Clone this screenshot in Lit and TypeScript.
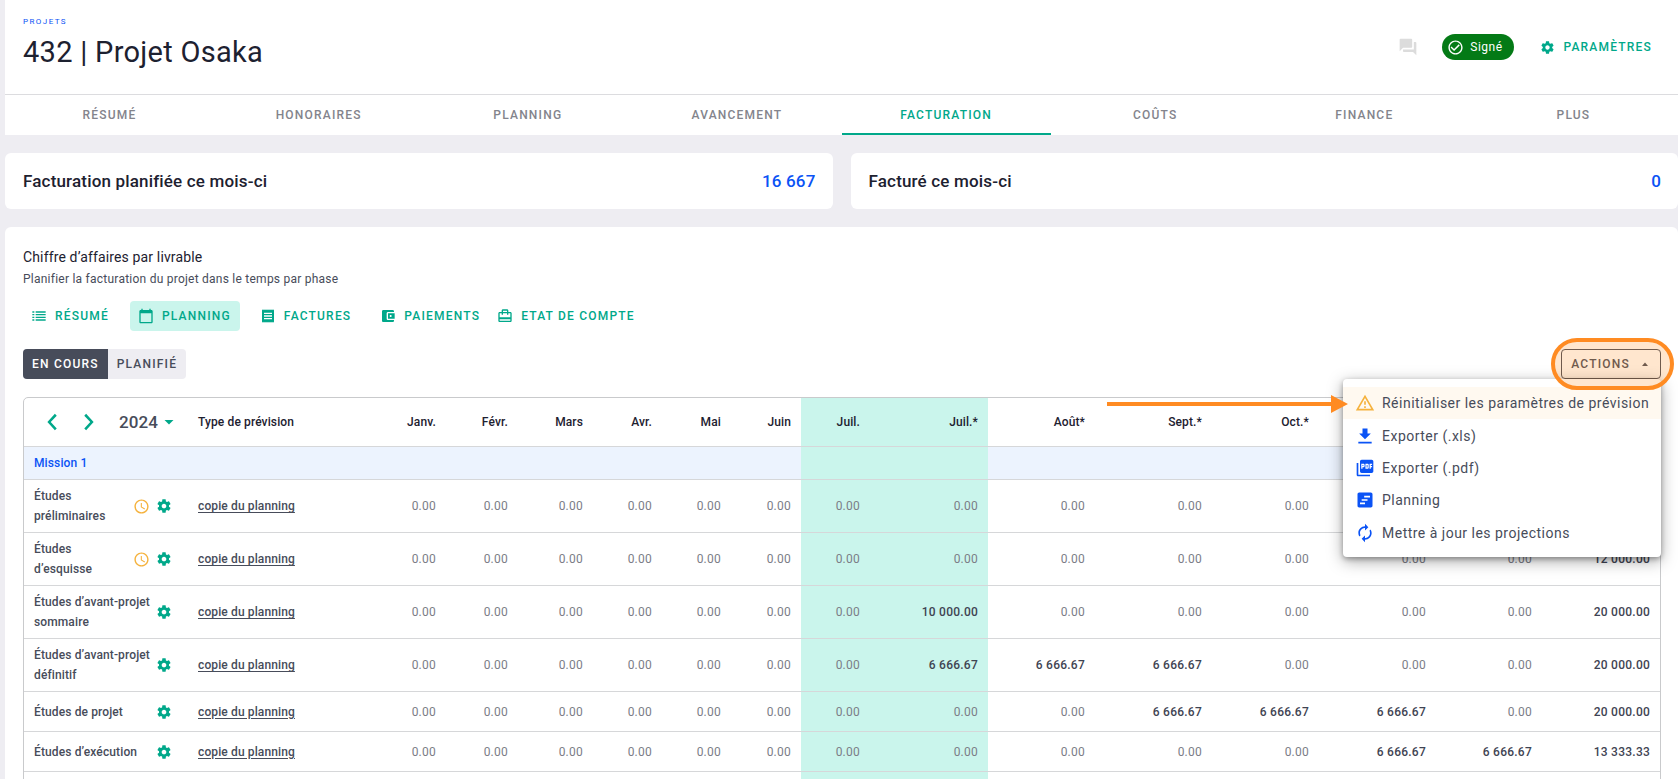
import { LitElement, html, css, svg, nothing } from "lit";
import { customElement, property, state } from "lit/decorators.js";
import { classMap } from "lit/directives/class-map.js";

const ICONS: Record<string, string> = {
  forum:
    "M21 6h-2v9H6v2c0 .55.45 1 1 1h11l4 4V7c0-.55-.45-1-1-1zm-4 6V3c0-.55-.45-1-1-1H3c-.55 0-1 .45-1 1v14l4-4h10c.55 0 1-.45 1-1z",
  check:
    "M16.59 7.58L10 14.17l-3.59-3.58L5 12l5 5 8-8zM12 2C6.48 2 2 6.48 2 12s4.48 10 10 10 10-4.48 10-10S17.52 2 12 2zm0 18c-4.42 0-8-3.58-8-8s3.58-8 8-8 8 3.58 8 8-3.58 8-8 8z",
  settings:
    "M19.43 12.98c.04-.32.07-.64.07-.98s-.03-.66-.07-.98l2.11-1.65c.19-.15.24-.42.12-.64l-2-3.46c-.12-.22-.39-.3-.61-.22l-2.49 1c-.52-.4-1.08-.73-1.69-.98l-.38-2.65C14.46 2.18 14.25 2 14 2h-4c-.25 0-.46.18-.49.42l-.38 2.65c-.61.25-1.17.59-1.69.98l-2.49-1c-.23-.09-.49 0-.61.22l-2 3.46c-.13.22-.07.49.12.64l2.11 1.65c-.04.32-.07.65-.07.98s.03.66.07.98l-2.11 1.65c-.19.15-.24.42-.12.64l2 3.46c.12.22.39.3.61.22l2.49-1c.52.4 1.08.73 1.69.98l.38 2.65c.03.24.24.42.49.42h4c.25 0 .46-.18.49-.42l.38-2.65c.61-.25 1.17-.59 1.69-.98l2.49 1c.23.09.49 0 .61-.22l2-3.46c.12-.22.07-.49-.12-.64l-2.11-1.65zM12 15.5c-1.93 0-3.5-1.57-3.5-3.5s1.57-3.5 3.5-3.5 3.5 1.57 3.5 3.5-1.57 3.5-3.5 3.5z",
  list: "M2 5h3v2H2zM2 9h3v2H2zM2 13h3v2H2zM2 17h3v2H2zM7 5h15v2H7zM7 9h15v2H7zM7 13h15v2H7zM7 17h15v2H7z",
  calendar:
    "M20 3h-1V1h-2v2H7V1H5v2H4c-1.1 0-2 .9-2 2v16c0 1.100.9 2 2 2h16c1.100 0 2-.9 2-2V5c0-1.100-.9-2-2-2zm0 18H4V8h16v13z",
  receipt:
    "M19.500 3.500L18 2l-1.500 1.500L15 2l-1.500 1.500L12 2l-1.500 1.500L9 2 7.500 3.500 6 2 4.500 3.500 3 2v20l1.500-1.500L6 22l1.500-1.500L9 22l1.500-1.500L12 22l1.500-1.500L15 22l1.500-1.500L18 22l1.500-1.500L21 22V2l-1.500 1.500zM18 17H6v-2h12v2zm0-4H6v-2h12v2zm0-4H6V7h12v2z",
  wallet:
    "M21 18v1c0 1.100-.9 2-2 2H5c-1.110 0-2-.9-2-2V5c0-1.100.89-2 2-2h14c1.100 0 2 .9 2 2v1h-9c-1.110 0-2 .9-2 2v8c0 1.100.89 2 2 2h9zm-9-2h10V8H12v8zm4-2.500c-.83 0-1.500-.67-1.500-1.500s.67-1.500 1.500-1.500 1.500.67 1.500 1.500-.67 1.500-1.500 1.500z",
  travel:
    "M20 6h-3V4c0-1.110-.89-2-2-2H9c-1.110 0-2 .89-2 2v2H4c-1.110 0-2 .89-2 2v11c0 1.110.89 2 2 2h16c1.110 0 2-.89 2-2V8c0-1.110-.89-2-2-2zM9 4h6v2H9V4zm11 15H4v-2h16v2zm0-5H4V8h3v2h2V8h6v2h2V8h3v6z",
  clock:
    "M11.990 2C6.470 2 2 6.480 2 12s4.470 10 9.990 10C17.520 22 22 17.520 22 12S17.520 2 11.990 2zM12 20c-4.420 0-8-3.580-8-8s3.580-8 8-8 8 3.580 8 8-3.580 8-8 8zm.5-13H11v6l5.250 3.150.75-1.230-4.500-2.670z",
  warning:
    "M12 5.990L19.530 19H4.470L12 5.990M12 2L1 21h22L12 2zm1 14h-2v2h2v-2zm0-6h-2v4h2v-4z",
  download: "M19 9h-4V3H9v6H5l7 7 7-7zM4 19v2h16v-2H4z",
  pdf: "M20 2H8c-1.100 0-2 .9-2 2v12c0 1.100.9 2 2 2h12c1.100 0 2-.9 2-2V4c0-1.100-.9-2-2-2zm-8.500 7.500c0 .83-.67 1.500-1.500 1.500H9v2H7.500V7H10c.83 0 1.500.67 1.500 1.500v1zm5 2c0 .83-.67 1.500-1.500 1.500h-2.500V7H15c.83 0 1.500.67 1.500 1.500v3zm4-3H19v1h1.500V11H19v2h-1.500V7h3v1.500zM9 9.500h1v-1H9v1zM4 6H2v14c0 1.100.9 2 2 2h14v-2H4V6zm10 5.500h1v-3h-1v3z",
  gantt:
    "M19 3H5c-1.100 0-2 .9-2 2v14c0 1.100.9 2 2 2h14c1.100 0 2-.9 2-2V5c0-1.100-.9-2-2-2zM12 17H6v-2h6v2zm3-4H8v-2h7v2zm3-4h-7V7h7v2z",
  renew:
    "M12 6v3l4-4-4-4v3c-4.420 0-8 3.580-8 8 0 1.570.46 3.030 1.240 4.260L6.700 14.800c-.45-.83-.7-1.790-.7-2.800 0-3.310 2.690-6 6-6zm6.760 1.740L17.300 9.200c.44.84.7 1.790.7 2.800 0 3.310-2.690 6-6 6v-3l-4 4 4 4v-3c4.420 0 8-3.580 8-8 0-1.570-.46-3.030-1.240-4.260z",
  prev: "M17 3.500 14.500 1 4.500 12l10 11 2.500-2.500L9 12z",
  next: "M7 3.500 9.500 1l10 11-10 11L7 20.500 15 12z",
};

function icon(name: string, size: number) {
  return html`<svg width=${size} height=${size} viewBox="0 0 24 24" aria-hidden="true">
    ${svg`<path fill="currentColor" fill-rule="evenodd" d=${ICONS[name]}></path>`}
  </svg>`;
}

const TABS = ["Résumé", "Honoraires", "Planning", "Avancement", "Facturation", "Coûts", "Finance", "Plus"];

const VIEWS = [
  { icon: "list", label: "Résumé" },
  { icon: "calendar", label: "Planning" },
  { icon: "receipt", label: "Factures" },
  { icon: "wallet", label: "Paiements" },
  { icon: "travel", label: "Etat de compte" },
];

const MENU = [
  { icon: "warning", label: "Réinitialiser les paramètres de prévision", warn: true },
  { icon: "download", label: "Exporter (.xls)" },
  { icon: "pdf", label: "Exporter (.pdf)" },
  { icon: "gantt", label: "Planning" },
  { icon: "renew", label: "Mettre à jour les projections" },
];

interface Column {
  label: string;
  width: number;
  current?: boolean;
}

const COLUMNS: Column[] = [
  { label: "Janv.", width: 71 },
  { label: "Févr.", width: 72 },
  { label: "Mars", width: 75 },
  { label: "Avr.", width: 69 },
  { label: "Mai", width: 69 },
  { label: "Juin", width: 70 },
  { label: "Juil.", width: 69, current: true },
  { label: "Juil.*", width: 118, current: true },
  { label: "Août*", width: 107 },
  { label: "Sept.*", width: 117 },
  { label: "Oct.*", width: 107 },
  { label: "Nov.*", width: 117 },
  { label: "Déc.*", width: 106 },
  { label: "Total", width: 118 },
];

interface Row {
  name: string;
  pending?: boolean;
  values: Record<number, string>;
}

const ROWS: Row[] = [
  { name: "Études préliminaires", pending: true, values: {} },
  { name: "Études d’esquisse", pending: true, values: { 13: "12 000.00" } },
  { name: "Études d’avant-projet sommaire", values: { 7: "10 000.00", 13: "20 000.00" } },
  { name: "Études d’avant-projet définitif", values: { 7: "6 666.67", 8: "6 666.67", 9: "6 666.67", 13: "20 000.00" } },
  { name: "Études de projet", values: { 9: "6 666.67", 10: "6 666.67", 11: "6 666.67", 13: "20 000.00" } },
  { name: "Études d’exécution", values: { 11: "6 666.67", 12: "6 666.67", 13: "13 333.33" } },
];

const base = css`
  * {
    box-sizing: border-box;
  }
  a {
    color: inherit;
    text-decoration: none;
  }
  button,
  select {
    font: inherit;
    letter-spacing: inherit;
    color: inherit;
    background: none;
    border: 0;
    margin: 0;
    padding: 0;
    cursor: pointer;
  }
  svg {
    display: block;
    flex: none;
  }
`;

@customElement("project-header")
class ProjectHeader extends LitElement {
  static styles = [
    base,
    css`
      :host {
        display: block;
        background: #fff;
      }
      .top {
        display: flex;
        justify-content: space-between;
        align-items: center;
        height: 94px;
        padding: 0 26px 0 18px;
      }
      .crumb {
        display: block;
        font-size: 8px;
        line-height: 12px;
        letter-spacing: 0.18em;
        text-transform: uppercase;
        color: #0b53f5;
      }
      h1 {
        margin: 6px 0 8px;
        font-size: 29px;
        line-height: 36px;
        font-weight: 400;
        letter-spacing: 0.01em;
        color: #1d2130;
      }
      .tools {
        display: flex;
        align-items: center;
      }
      .forum {
        color: #dcdcdc;
        margin-right: 24px;
      }
      .badge {
        display: flex;
        align-items: center;
        gap: 6px;
        height: 26px;
        padding: 0 12px 0 5px;
        margin-right: 26px;
        border-radius: 13px;
        background: #047a16;
        color: #fff;
        font-size: 12px;
        letter-spacing: 0.04em;
      }
      .settings {
        display: flex;
        align-items: center;
        gap: 8px;
        font-size: 12px;
        font-weight: 500;
        letter-spacing: 0.1em;
        text-transform: uppercase;
        color: #00a88a;
      }
      nav {
        display: grid;
        grid-template-columns: repeat(8, 1fr);
        border-top: 1px solid #dcdcdf;
      }
      .tab {
        height: 40px;
        line-height: 40px;
        text-align: center;
        font-size: 12px;
        font-weight: 500;
        letter-spacing: 0.1em;
        text-transform: uppercase;
        color: #83848c;
      }
      .tab.active {
        color: #00a88a;
        box-shadow: inset 0 -2px #00a88a;
      }
    `,
  ];

  render() {
    return html`
      <div class="top">
        <div>
          <a class="crumb" href="#">Projets</a>
          <h1>432 | Projet Osaka</h1>
        </div>
        <div class="tools">
          <button class="forum" aria-label="Commentaires">${icon("forum", 20)}</button>
          <span class="badge">${icon("check", 17)}Signé</span>
          <button class="settings">${icon("settings", 15)}Paramètres</button>
        </div>
      </div>
      <nav>
        ${TABS.map(
          (t) => html`<a href="#" class=${classMap({ tab: true, active: t === "Facturation" })}>${t}</a>`,
        )}
      </nav>
    `;
  }
}

@customElement("stat-card")
class StatCard extends LitElement {
  @property() label = "";
  @property() value = "";

  static styles = css`
    :host {
      display: flex;
      justify-content: space-between;
      padding: 0 17px 0 18px;
      line-height: 56px;
      border-radius: 6px;
      background: #fff;
      font-size: 17px;
      font-weight: 500;
      letter-spacing: 0.01em;
      color: #1d2130;
    }
    .value {
      color: #0b53f5;
    }
  `;

  render() {
    return html`<span>${this.label}</span><span class="value">${this.value}</span>`;
  }
}

@customElement("actions-menu")
class ActionsMenu extends LitElement {
  @state() private open = true;

  static styles = [
    base,
    css`
      :host {
        display: block;
        position: relative;
        z-index: 1;
      }
      .trigger {
        display: flex;
        align-items: center;
        gap: 8px;
        height: 30px;
        padding: 0 8px 0 9px;
        border: 1px solid #474c5a;
        border-radius: 4px;
        font-size: 12px;
        font-weight: 500;
        letter-spacing: 0.1em;
        text-transform: uppercase;
        color: #474c5a;
      }
      .menu {
        position: absolute;
        top: 100%;
        right: 0;
        display: flex;
        flex-direction: column;
        width: 318px;
        height: 178px;
        padding: 8px 0;
        border-radius: 4px;
        background: #fff;
        box-shadow: 0 4px 16px rgba(0, 0, 0, 0.35), 0 2px 5px rgba(0, 0, 0, 0.3);
      }
      .item {
        flex: 1;
        display: flex;
        align-items: center;
        gap: 7px;
        padding: 0 12px;
        white-space: nowrap;
        font-size: 14px;
        color: #474c5a;
        letter-spacing: 0.035em;
      }
      .item svg {
        color: #0b53f5;
      }
      .item.warn {
        background: #fff9f0;
      }
      .item.warn svg {
        color: #f5b23d;
      }
      .ring {
        position: absolute;
        inset: -11px -13px -11px -10px;
        border: 4px solid #ff8b22;
        border-radius: 26px;
        background: rgba(255, 139, 34, 0.22);
        pointer-events: none;
      }
      .arrow {
        position: absolute;
        top: 46px;
        right: 313px;
        pointer-events: none;
      }
    `,
  ];

  render() {
    return html`
      <button class="trigger" aria-haspopup="menu" aria-expanded=${this.open} @click=${() => (this.open = !this.open)}>
        Actions
        <svg width="14" height="14" viewBox="0 0 14 14" aria-hidden="true"><path d="M4 9 7 5.500 10 9z" fill="#474c5a" /></svg>
      </button>
      ${this.open
        ? html`<div class="menu" role="menu">
            ${MENU.map(
              (m) => html`<button role="menuitem" class=${classMap({ item: true, warn: !!m.warn })}>
                ${icon(m.icon, 20)}${m.label}
              </button>`,
            )}
          </div>`
        : nothing}
      <div class="ring"></div>
      <svg class="arrow" width="241" height="18" viewBox="0 0 241 18" aria-hidden="true">
        <path d="M0 7H224V0L241 9 224 18V11H0z" fill="#ff8b22" />
      </svg>
    `;
  }
}

@customElement("forecast-table")
class ForecastTable extends LitElement {
  static styles = [
    base,
    css`
      :host {
        display: block;
        border: 1px solid #c9cacc;
        border-radius: 5px;
        overflow: hidden;
      }
      table {
        width: 100%;
        table-layout: fixed;
        border-collapse: separate;
        border-spacing: 0;
        font-size: 12px;
        line-height: 20px;
        letter-spacing: 0.01em;
      }
      th,
      td {
        padding: 0 10px;
        border-bottom: 1px solid #d6d7d9;
        text-align: right;
        font-weight: 400;
        color: #7b7d87;
        white-space: nowrap;
      }
      td {
        letter-spacing: 0.02em;
      }
      thead th {
        height: 49px;
        font-weight: 500;
        color: #1d2130;
      }
      .left {
        text-align: left;
        letter-spacing: 0.01em;
      }
      .group th,
      .group td {
        height: 33px;
        background: #ecf3fe;
        color: #0b53f5;
        font-weight: 500;
      }
      .group .current,
      .current {
        background: #caf5ec;
      }
      td.filled {
        font-weight: 500;
        color: #3f4453;
      }
      .row th,
      .row td {
        height: 40px;
      }
      .row th {
        padding: 6px 10px;
        font-weight: 500;
        color: #474c5a;
        white-space: normal;
      }
      .phase {
        display: flex;
        align-items: center;
        gap: 6px;
        margin-right: 6px;
      }
      .phase .name {
        flex: 1;
      }
      .phase button {
        color: #00a88a;
      }
      .pending {
        color: #f5b23d;
      }
      .row .kind {
        color: #474c5a;
        font-weight: 500;
      }
      .kind a {
        text-decoration: underline;
        text-underline-offset: 2px;
      }
      .years {
        display: flex;
        align-items: center;
        padding-left: 10px;
        color: #00a88a;
      }
      .years button {
        margin-right: 17px;
      }
      .year {
        display: flex;
        align-items: center;
        gap: 5px;
        margin-left: 5px;
      }
      select {
        appearance: none;
        font-size: 17px;
        font-weight: 500;
        line-height: 24px;
        color: #474c5a;
      }
    `,
  ];

  private cell(row: Row, col: Column, i: number) {
    const v = row.values[i];
    return html`<td class=${classMap({ filled: !!v, current: !!col.current })}>${v ?? "0.00"}</td>`;
  }

  render() {
    return html`
      <table>
        <colgroup>
          <col style="width:164px" />
          <col style="width:187px" />
          ${COLUMNS.map((c) => html`<col style="width:${c.width}px" />`)}
        </colgroup>
        <thead>
          <tr>
            <th class="left">
              <div class="years">
                <button aria-label="Année précédente">${icon("prev", 18)}</button>
                <button aria-label="Année suivante">${icon("next", 18)}</button>
                <label class="year">
                  <select aria-label="Année"><option>2024</option></select>
                  <svg width="10" height="6" viewBox="0 0 10 6" aria-hidden="true"><path d="M0.500 1h9L5 5.500z" fill="#00a88a" /></svg>
                </label>
              </div>
            </th>
            <th class="left">Type de prévision</th>
            ${COLUMNS.map((c) => html`<th class=${classMap({ current: !!c.current })}>${c.label}</th>`)}
          </tr>
        </thead>
        <tbody>
          <tr class="group">
            <th class="left">Mission 1</th>
            <td></td>
            ${COLUMNS.map((c) => html`<td class=${classMap({ current: !!c.current })}></td>`)}
          </tr>
          ${ROWS.map(
            (r) => html`<tr class="row">
              <th class="left" scope="row">
                <div class="phase">
                  <span class="name">${r.name}</span>
                  ${r.pending ? html`<span class="pending">${icon("clock", 17)}</span>` : nothing}
                  <button aria-label="Paramètres de la phase">${icon("settings", 16)}</button>
                </div>
              </th>
              <td class="left kind"><a href="#">copie du planning</a></td>
              ${COLUMNS.map((c, i) => this.cell(r, c, i))}
            </tr>`,
          )}
          <tr class="row">
            <th></th>
            <td></td>
            ${COLUMNS.map((c) => html`<td class=${classMap({ current: !!c.current })}></td>`)}
          </tr>
        </tbody>
      </table>
    `;
  }
}

@customElement("app-root")
class AppRoot extends LitElement {
  @state() private mode = "En cours";

  static styles = [
    base,
    css`
      :host {
        display: block;
        height: 100vh;
        overflow: hidden;
        padding-left: 5px;
        background: #eeedf2;
        font-family: Roboto, "Liberation Sans", sans-serif;
        font-size: 12px;
        color: #1d2130;
      }
      .stats {
        display: grid;
        grid-template-columns: 1fr 1fr;
        gap: 18px;
        margin: 18px 0;
      }
      .panel {
        padding: 20px 17px 18px 18px;
        border-radius: 6px;
        background: #fff;
      }
      h2 {
        margin: 0;
        font-size: 14px;
        line-height: 20px;
        font-weight: 400;
        letter-spacing: 0.01em;
      }
      .sub {
        margin: 2px 0 12px;
        font-size: 12px;
        line-height: 20px;
        letter-spacing: 0.02em;
        color: #474c5a;
      }
      .views {
        display: flex;
        gap: 12px;
      }
      .view {
        display: flex;
        align-items: center;
        gap: 8px;
        height: 30px;
        padding: 0 9px 0 8px;
        border-radius: 4px;
        font-size: 12px;
        font-weight: 500;
        letter-spacing: 0.1em;
        text-transform: uppercase;
        color: #00a88a;
      }
      .view:last-child {
        margin-left: -12px;
      }
      .view.active {
        background: #caf5ec;
      }
      .bar {
        display: flex;
        justify-content: space-between;
        margin: 18px 0;
      }
      .toggle {
        display: flex;
        border-radius: 4px;
        overflow: hidden;
        background: #eeedf2;
      }
      .mode {
        height: 30px;
        padding: 0 9px;
        font-size: 12px;
        font-weight: 500;
        letter-spacing: 0.1em;
        text-transform: uppercase;
        color: #474c5a;
      }
      .mode.active {
        background: #474c5a;
        color: #fff;
      }
    `,
  ];

  render() {
    return html`
      <project-header></project-header>
      <div class="stats">
        <stat-card label="Facturation planifiée ce mois-ci" value="16 667"></stat-card>
        <stat-card label="Facturé ce mois-ci" value="0"></stat-card>
      </div>
      <section class="panel">
        <h2>Chiffre d’affaires par livrable</h2>
        <p class="sub">Planifier la facturation du projet dans le temps par phase</p>
        <div class="views">
          ${VIEWS.map(
            (v) => html`<button class=${classMap({ view: true, active: v.label === "Planning" })}>
              ${icon(v.icon, 16)}${v.label}
            </button>`,
          )}
        </div>
        <div class="bar">
          <div class="toggle">
            ${["En cours", "Planifié"].map(
              (m) => html`<button
                class=${classMap({ mode: true, active: m === this.mode })}
                @click=${() => (this.mode = m)}
              >${m}</button>`,
            )}
          </div>
          <actions-menu></actions-menu>
        </div>
        <forecast-table></forecast-table>
      </section>
    `;
  }
}
